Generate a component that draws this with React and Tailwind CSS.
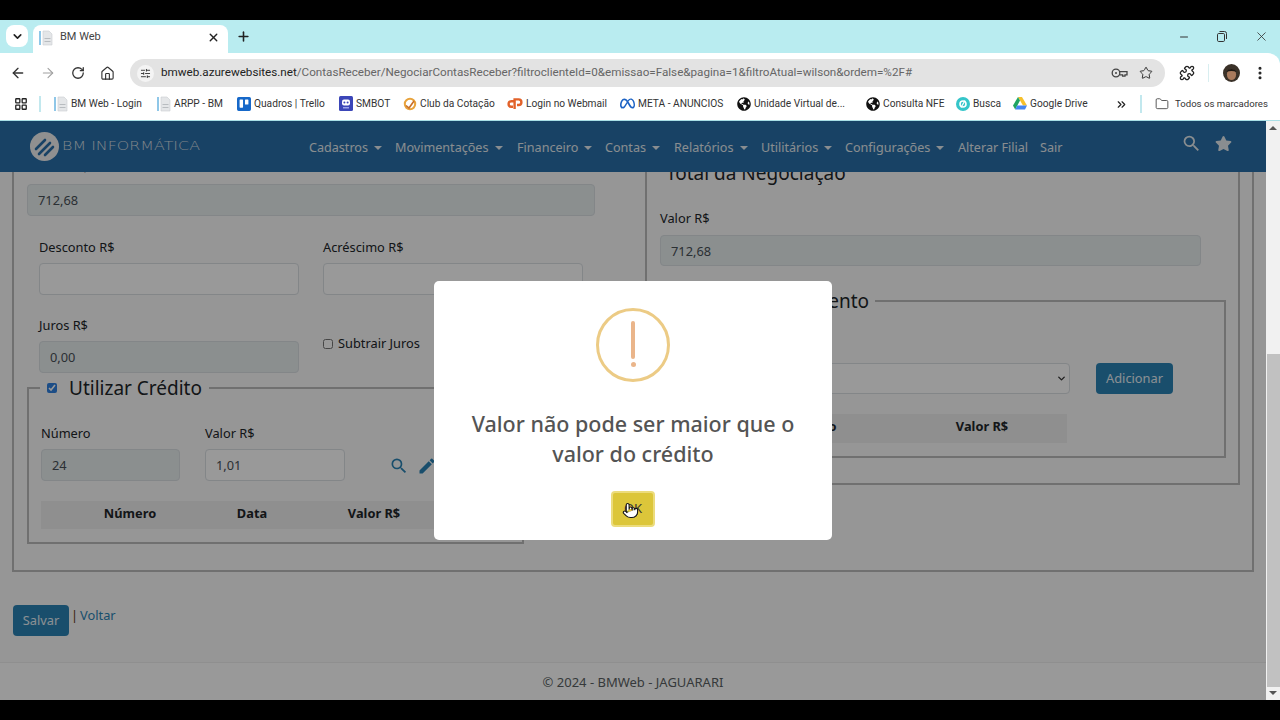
import React from 'react';
import { ArrowLeft, ArrowRight, RotateCw, Home, Star, Puzzle, EllipsisVertical, Minus, X, Plus, ChevronDown, ChevronsRight, Folder, SlidersHorizontal, LayoutGrid, Pointer } from 'lucide-react';
import { FaGlobeAmericas, FaStar } from 'react-icons/fa';
import { MdSearch, MdEdit } from 'react-icons/md';
import { SiMeta, SiTrello } from 'react-icons/si';

function DocIcon() {
  return (
    <svg width="14" height="16" viewBox="0 0 14 16" className="shrink-0">
      <rect x="0" y="1" width="2" height="14" fill="#8fc7e8" />
      <path d="M4 1h6l3 3v11H4z" fill="#e4e6e8" stroke="#c9ccd0" strokeWidth="0.6" />
      <rect x="5.5" y="8" width="6" height="1" fill="#b8bcc0" />
      <rect x="5.5" y="11" width="6" height="1" fill="#b8bcc0" />
    </svg>
  );
}

function RobotIcon() {
  return (
    <svg width="14" height="15" viewBox="0 0 14 15" className="shrink-0">
      <rect width="14" height="15" rx="1.5" fill="#3b46b8" />
      <rect x="3" y="3.5" width="8" height="6" rx="2" fill="#fff" />
      <circle cx="5.4" cy="6.4" r="1" fill="#3b46b8" />
      <circle cx="8.6" cy="6.4" r="1" fill="#3b46b8" />
      <rect x="4" y="11" width="6" height="1.5" fill="#9aa2ea" />
    </svg>
  );
}

function ClubIcon() {
  return (
    <svg width="14" height="14" viewBox="0 0 14 14" className="shrink-0">
      <circle cx="7" cy="7" r="5.2" fill="none" stroke="#e8a33c" strokeWidth="2" />
      <path d="M3 8.5l3 2.5 5-7" fill="none" stroke="#c9702a" strokeWidth="1.6" />
    </svg>
  );
}

function BuscaIcon() {
  return (
    <svg width="14" height="14" viewBox="0 0 14 14" className="shrink-0">
      <circle cx="7" cy="7" r="7" fill="#35c5c9" />
      <circle cx="7" cy="7" r="3" fill="none" stroke="#fff" strokeWidth="1.6" />
      <path d="M9 3.5L5 10.5" stroke="#fff" strokeWidth="1.2" />
    </svg>
  );
}

function DriveIcon() {
  return (
    <svg width="14" height="13" viewBox="0 0 14 13" className="shrink-0">
      <polygon points="5,0 9,0 14,8.5 10,8.5" fill="#f6c02c" />
      <polygon points="5,0 7,3.5 2.2,12.5 0,8.5" fill="#1fa463" />
      <polygon points="4.2,8.5 14,8.5 12,12.5 2.2,12.5" fill="#4285f4" />
    </svg>
  );
}

function WebmailIcon() {
  return (
    <svg width="16" height="12" viewBox="0 0 16 12" fill="none" stroke="#e2622a" strokeWidth="2.4" className="shrink-0">
      <path d="M7 3.2H4.4a2.8 2.8 0 0 0 0 5.6H6" />
      <path d="M7.6 11V1.4h4a2.8 2.8 0 0 1 0 5.6H10" />
    </svg>
  );
}

function KeyIcon() {
  return (
    <svg width="17" height="10" viewBox="0 0 17 10" fill="none" stroke="#444" strokeWidth="1.3">
      <circle cx="5" cy="5" r="3.8" />
      <circle cx="5" cy="5" r="1" fill="#444" stroke="none" />
      <path d="M8.8 3.6H16v3.2h-2v1.4h-2.4V6.8H8.8" />
    </svg>
  );
}

function RestoreIcon() {
  return (
    <svg width="10" height="11" viewBox="0 0 10 11" fill="none" stroke="#333" strokeWidth="1">
      <rect x="0.5" y="2.5" width="7" height="8" rx="1.2" />
      <path d="M2.5 0.5h5a2 2 0 0 1 2 2v5.5" />
    </svg>
  );
}

function Avatar() {
  return (
    <svg width="17" height="18" viewBox="0 0 17 18">
      <ellipse cx="8.5" cy="9" rx="8.5" ry="9" fill="#3a3128" />
      <ellipse cx="8.5" cy="10.5" rx="4.6" ry="5.6" fill="#a97a5c" />
      <path d="M3.5 8c1-4 9-4 10 0-3-1.5-7-1.5-10 0z" fill="#1d1813" />
    </svg>
  );
}

function Logo() {
  return (
    <svg width="29" height="29" viewBox="0 0 29 29" className="shrink-0">
      <circle cx="14.5" cy="14.5" r="14.5" fill="#f1f1f1" />
      <path d="M6 17L15 8M9 22L20 11M15 23L23 15" stroke="#286fa8" strokeWidth="2.6" fill="none" strokeLinecap="round" />
    </svg>
  );
}

const bookmarks = [
  { label: 'BM Web - Login', icon: <DocIcon />, w: 'w-[103px]' },
  { label: 'ARPP - BM', icon: <DocIcon />, w: 'w-[80px]' },
  { label: 'Quadros | Trello', icon: <SiTrello size={14} color="#1668c9" className="shrink-0" />, w: 'w-[102px]' },
  { label: 'SMBOT', icon: <RobotIcon />, w: 'w-[64px]' },
  { label: 'Club da Cotação', icon: <ClubIcon />, w: 'w-[104px]' },
  { label: 'Login no Webmail', icon: <WebmailIcon />, w: 'w-[113px]' },
  { label: 'META - ANUNCIOS', icon: <SiMeta size={15} color="#1c62c4" className="shrink-0" />, w: 'w-[117px]' },
  { label: 'Unidade Virtual de...', icon: <FaGlobeAmericas size={14} color="#111" className="shrink-0" />, w: 'w-[129px]' },
  { label: 'Consulta NFE', icon: <FaGlobeAmericas size={14} color="#111" className="shrink-0" />, w: 'w-[90px]' },
  { label: 'Busca', icon: <BuscaIcon />, w: 'w-[57px]' },
  { label: 'Google Drive', icon: <DriveIcon />, w: 'w-[94px]' },
];

function ChromeBar() {
  return (
    <div className='shrink-0 bg-[#b9ecf0] font-["Roboto",sans-serif]'>
      <div className="h-[33px] flex items-end">
        <div className="ml-[6px] mb-[6px] w-[22px] h-[22px] rounded-lg bg-white flex items-center justify-center">
          <ChevronDown size={13} strokeWidth={3} color="#222" />
        </div>
        <div className="ml-[5px] w-[195px] h-[28px] bg-white rounded-t-lg flex items-center pl-[6px] pr-[8px] pb-[3px] gap-[7px]">
          <DocIcon />
          <span className="flex-1 text-[11px] text-[#444]">BM Web</span>
          <X size={13} strokeWidth={2.5} color="#222" />
        </div>
        <div className="ml-[8px] mb-[9px]">
          <Plus size={15} strokeWidth={2.5} color="#222" />
        </div>
        <div className="ml-auto mb-[9px] mr-[11px] flex items-center gap-[27px]">
          <Minus size={12} color="#333" />
          <RestoreIcon />
          <X size={15} strokeWidth={1.3} color="#333" />
        </div>
      </div>
      <div className="h-[35px] bg-white rounded-tr-xl flex items-center pl-[10px] pr-[10px] pt-[5px]">
        <ArrowLeft size={16} strokeWidth={2} color="#333" />
        <ArrowRight size={16} strokeWidth={1.6} color="#a0a0a0" className="ml-[14px]" />
        <RotateCw size={14} strokeWidth={2.2} color="#333" className="ml-[15px]" />
        <Home size={15} strokeWidth={1.8} color="#333" className="ml-[15px]" />
        <div className="ml-[15px] w-[1035px] h-[28px] bg-[#e3e3e3] rounded-full flex items-center pl-[7px] pr-[12px]">
          <div className="w-[17px] h-[17px] rounded-full bg-[#f4f4f4] flex items-center justify-center">
            <SlidersHorizontal size={11} strokeWidth={2} color="#333" />
          </div>
          <span className="ml-[7px] flex-1 whitespace-nowrap text-[11.67px] text-[#666]">
            <span className="text-[#222]">bmweb.azurewebsites.net</span>/ContasReceber/NegociarContasReceber?filtroclienteId=0&amp;emissao=False&amp;pagina=1&amp;filtroAtual=wilson&amp;ordem=%2F#
          </span>
          <KeyIcon />
          <Star size={14} strokeWidth={1.7} color="#333" className="ml-[11px]" />
        </div>
        <Puzzle size={16} strokeWidth={2} color="#222" className="ml-[14px]" />
        <div className="ml-[13px] w-px h-[18px] bg-[#d8eef0]" />
        <div className="ml-[14px]"><Avatar /></div>
        <EllipsisVertical size={16} strokeWidth={2.6} color="#222" className="ml-[12px]" />
      </div>
      <div className="h-[33px] bg-white border-b border-[#a9dfe6] flex items-center pl-[14px] text-[10.2px] text-[#333]">
        <LayoutGrid size={14} strokeWidth={2.2} color="#222" />
        <div className="ml-[11px] mr-[13px] w-[2px] h-[16px] bg-[#c2e8ee]" />
        {bookmarks.map((b) => (
          <div key={b.label} className={`${b.w} shrink-0 flex items-center gap-[3px] whitespace-nowrap`}>
            {b.icon}
            <span>{b.label}</span>
          </div>
        ))}
        <ChevronsRight size={13} strokeWidth={2.2} color="#222" className="ml-[8px]" />
        <div className="ml-[12px] w-[2px] h-[18px] bg-[#c2e8ee]" />
        <Folder size={14} strokeWidth={1.5} color="#444" className="ml-[13px]" />
        <span className="ml-[6px] whitespace-nowrap text-[9.6px]">Todos os marcadores</span>
      </div>
    </div>
  );
}

const menu = [
  { label: 'Cadastros', w: 'w-[86px]', caret: true },
  { label: 'Movimentações', w: 'w-[122px]', caret: true },
  { label: 'Financeiro', w: 'w-[88px]', caret: true },
  { label: 'Contas', w: 'w-[69px]', caret: true },
  { label: 'Relatórios', w: 'w-[87px]', caret: true },
  { label: 'Utilitários', w: 'w-[84px]', caret: true },
  { label: 'Configurações', w: 'w-[113px]', caret: true },
  { label: 'Alterar Filial', w: 'w-[82px]' },
  { label: 'Sair', w: 'w-[30px]' },
];

function Header() {
  return (
    <header className="h-[51px] shrink-0 bg-[#286fa8] flex items-center relative z-10">
      <div className="ml-[30px] w-[279px] flex items-center gap-[3px]">
        <Logo />
        <span className='origin-left scale-x-[1.27] font-["DejaVu_Sans",sans-serif] font-extralight text-[12.5px] text-[#d4dde4] whitespace-nowrap'>BM INFORMÁTICA</span>
      </div>
      <nav className="mt-[4px] flex items-center text-[12.6px] text-[#e4ebf0]">
        {menu.map((m) => (
          <div key={m.label} className={`${m.w} flex items-center gap-[6px] whitespace-nowrap`}>
            <span>{m.label}</span>
            {m.caret && <span className="w-0 h-0 border-x-[4.5px] border-x-transparent border-t-[4.5px] border-t-[#e4ebf0]" />}
          </div>
        ))}
      </nav>
      <div className="ml-auto mr-[34px] mb-[6px] flex items-center gap-[13px]">
        <MdSearch size={21} color="#e4ebf0" />
        <FaStar size={17} color="#e4ebf0" />
      </div>
    </header>
  );
}

function Field({ label, value, disabled, className }) {
  return (
    <div className={className}>
      <label className="block h-6 leading-6 text-[#212529] whitespace-nowrap">{label}</label>
      <input
        readOnly
        value={value}
        className={`mt-[4px] block w-full h-8 px-[10px] border border-[#dadfe3] rounded ${disabled ? 'bg-[#e8eeef]' : 'bg-white'} text-[#495057]`}
      />
    </div>
  );
}

function LeftColumn() {
  return (
    <div className="mt-[5px]">
      <label className="block h-6 leading-6 ml-[12px] text-[#212529]">Valor R$</label>
      <input readOnly value="712,68" className="mt-[5px] block w-[568px] h-8 px-[10px] border border-[#dadfe3] rounded bg-[#e8eeef] text-[#495057]" />

      <div className="mt-[19px] ml-[12px] flex gap-[24px]">
        <Field label="Desconto R$" value="" className="w-[260px]" />
        <Field label="Acréscimo R$" value="" className="w-[260px]" />
      </div>

      <div className="mt-[18px] ml-[12px] flex gap-[24px]">
        <Field label="Juros R$" value="0,00" disabled className="w-[260px]" />
        <label className="mt-[23px] flex items-center gap-[5px] h-[16px] text-[#212529]">
          <input type="checkbox" readOnly className="w-[10px] h-[10px]" />
          Subtrair Juros
        </label>
      </div>

      <fieldset className="w-[497px] border-2 border-[#bbbbbb] pl-[12px] pb-[13px]">
        <legend className="-ml-[1px] px-[7px] h-[30px] flex items-center gap-[12px] text-[19px] text-[#212529]">
          <input type="checkbox" checked readOnly className="w-[10px] h-[10px] accent-[#2f80e0]" />
          Utilizar Crédito
        </legend>
        <div className="mt-[18px] flex items-end">
          <Field label="Número" value="24" disabled className="w-[139px]" />
          <Field label="Valor R$" value="1,01" className="ml-[25px] w-[140px]" />
          <div className="ml-[44px] mb-[5px] flex items-center gap-[8px]">
            <MdSearch size={20} color="#2a83b5" />
            <MdEdit size={20} color="#2a83b5" />
          </div>
        </div>
        <div className="mt-[20px] w-[468px] h-7 pb-[2px] bg-[#eeeeee] grid grid-cols-[28px_122px_122px_122px_1fr] items-center text-center font-bold text-[#212529]">
          <span />
          <span>Número</span>
          <span>Data</span>
          <span>Valor R$</span>
          <span />
        </div>
      </fieldset>
    </div>
  );
}

function RightColumn() {
  return (
    <div className="border-2 border-[#bbbbbb] pl-[13px] pb-[25px]">
      <h2 className="mt-[6px] ml-[6px] h-[30px] leading-[30px] text-[19px] text-[#212529]">Total da Negociação</h2>
      <label className="mt-[18px] block h-6 leading-6 text-[#212529]">Valor R$</label>
      <input readOnly value="712,68" className="mt-[5px] block w-[541px] h-[31px] px-[10px] border border-[#dadfe3] rounded bg-[#e8eeef] text-[#495057]" />

      <fieldset className="mt-[20px] w-[566px] border-2 border-[#bbbbbb] pl-[13px] pb-[13px]">
        <legend className="-ml-[5px] px-[6px] h-[30px] leading-[30px] text-[19px] text-[#212529]">Forma de Pagamento</legend>
        <label className="mt-[18px] block h-6 leading-6 text-[#212529]">Tipo</label>
        <div className="mt-[5px] flex">
          <div className="relative w-[395px] h-[31px]">
            <select className="w-full h-full px-2 appearance-none border border-[#dadfe3] rounded bg-white" />
            <ChevronDown size={11} strokeWidth={3} color="#333" className="absolute right-[3px] top-[10px]" />
          </div>
          <button className="ml-[26px] w-[77px] h-[31px] rounded bg-[#2a83b5] text-[#e8f0f6]">Adicionar</button>
        </div>
        <div className="mt-[20px] w-[392px] h-[29px] pb-[3px] bg-[#eeeeee] grid grid-cols-[222px_170px] items-center text-center font-bold text-[#212529]">
          <span className="pl-[12px]">Parcelamento</span>
          <span>Valor R$</span>
        </div>
      </fieldset>
    </div>
  );
}

function Modal() {
  return (
    <div className="absolute inset-0 z-20 bg-black/40 flex items-center justify-center">
      <div className="w-[398px] h-[259px] bg-white rounded-[5px] flex flex-col items-center pt-[27px]">
        <div className="w-[74px] h-[74px] rounded-full border-[3px] border-[#eccb85] flex flex-col items-center pt-[10px]">
          <span className="w-[4px] h-[38px] rounded-sm bg-[#eab58a]" />
          <span className="mt-[3px] w-[5px] h-[5px] rounded-full bg-[#eab58a]" />
        </div>
        <p className="mt-[27px] w-[340px] text-center text-[21.5px] leading-[30px] font-medium text-[#545454]">Valor não pode ser maior que o valor do crédito</p>
        <button className="relative mt-[22px] w-[44px] h-[36px] rounded-[4px] bg-[#dcc63a] border-2 border-[#ecdc7c] text-[13px] text-[#333]">
          OK
          <Pointer size={17} fill="#fff" strokeWidth={1.5} color="#111" className="absolute left-[9px] top-[9px]" />
        </button>
      </div>
    </div>
  );
}

export default function App() {
  return (
    <div className='h-screen flex flex-col overflow-hidden bg-black py-5 text-[12.8px] font-["Noto_Sans",sans-serif]'>
      <ChromeBar />
      <div className="flex flex-1 min-h-0">
        <div className="relative flex-1 min-w-0 flex flex-col bg-white">
          <Header />
          <main className="flex-1 min-h-0 overflow-hidden bg-[#fafafa]">
            <div className="-mt-[32px] ml-[12px] w-[1242px] border-2 border-[#bbbbbb] pt-[8px] pl-[13px] pr-[12px] pb-[26px] grid grid-cols-[606px_595px] gap-x-3 items-start">
              <LeftColumn />
              <RightColumn />
            </div>
            <div className="mt-[33px] ml-[13px] flex items-start">
              <button className="w-[56px] h-[31px] pt-[1px] rounded bg-[#2a83b5] text-[#e8f0f6]">Salvar</button>
              <span className="ml-[2px] -mt-[2px] h-6 leading-6 text-[#5a3a20]">|</span>
              <a href="#" className="ml-[2px] -mt-[2px] h-6 leading-6 text-[#2a83b5]">Voltar</a>
            </div>
          </main>
          <footer className="h-[38px] pt-[2px] shrink-0 border-t border-[#eeeeee] flex items-center justify-center text-[13px] text-[#5a5f63]">© 2024 - BMWeb - JAGUARARI</footer>
          <Modal />
        </div>
        <div className="w-[14px] shrink-0 bg-[#f1f1f1] flex flex-col items-center justify-between relative">
          <span className="mt-[5px] w-0 h-0 border-x-[4px] border-x-transparent border-b-[4px] border-b-[#555]" />
          <div className="absolute left-[1px] right-0 top-[233px] bottom-[13px] bg-[#c1c1c1]" />
          <span className="mb-[5px] w-0 h-0 border-x-[4px] border-x-transparent border-t-[4px] border-t-[#555]" />
        </div>
      </div>
    </div>
  );
}
